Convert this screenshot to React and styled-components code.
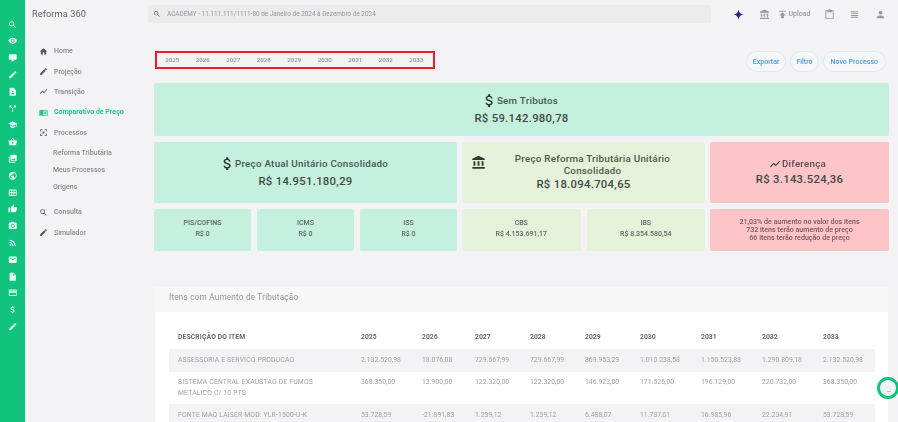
import React from "react";
import styled, { createGlobalStyle } from "styled-components";
import {
  MdSearch, MdVisibility, MdDesktopWindows, MdEdit, MdContactPage, MdCallSplit, MdSchool,
  MdShoppingBasket, MdPhotoLibrary, MdPublic, MdCalendarViewMonth, MdThumbUp, MdPhotoCamera,
  MdRssFeed, MdEmail, MdInsertDriveFile, MdCreditCard, MdAttachMoney, MdHome, MdShowChart,
  MdMenuBook, MdFilterCenterFocus, MdAccountBalance, MdPublish, MdContentPaste, MdViewHeadline, MdPerson,
} from "react-icons/md";

const Global = createGlobalStyle`
  html, body { margin: 0; padding: 0; background: #f3f3f5; overflow: hidden; }
  body { font-family: Roboto, "Liberation Sans", sans-serif; }
  * { box-sizing: border-box; }
`;

const Page = styled.div`
  display: flex;
  width: 898px;
  height: 422px;
  overflow: hidden;
  position: relative;
  filter: blur(0.6px);
`;

const Rail = styled.nav`
  flex: 0 0 25px;
  background: #10c47e;
  display: flex;
  flex-direction: column;
  align-items: center;
  padding-top: 16px;
  color: #eafff6;
`;
const RailItem = styled.span`
  flex: 0 0 16.8px;
  display: flex;
  align-items: center;
  justify-content: center;
  font-size: 9.5px;
`;

const Side = styled.aside`
  flex: 0 0 115px;
  padding: 7px 0 0 7px;
  color: #7b7b7f;
`;
const Brand = styled.div`
  height: 13px;
  line-height: 13px;
  font-size: 9.2px;
  color: #5f5f63;
  letter-spacing: 0.1px;
  margin-bottom: 21px;
`;
const MenuItem = styled.div`
  display: flex;
  align-items: center;
  gap: 6px;
  padding-left: 7px;
  height: 20.4px;
  font-size: 7px;
  font-weight: ${(p) => (p.$active ? 700 : 500)};
  color: ${(p) => (p.$active ? "#25c98c" : "#88888c")};
  svg { font-size: 9px; flex: none; color: ${(p) => (p.$active ? "#25c98c" : "#55555a")}; }
`;
const SubList = styled.div`
  padding-top: 2px;
  padding-bottom: 6px;
`;
const SubItem = styled.div`
  height: 17px;
  line-height: 17px;
  padding-left: 21px;
  font-size: 7px;
  font-weight: 500;
  color: #8a8a8e;
`;

const Main = styled.main`
  flex: 1;
  min-width: 0;
  display: flex;
  flex-direction: column;
  padding: 5px 9px 0 8px;
`;
const Top = styled.header`
  flex: none;
  display: flex;
  align-items: center;
  height: 18px;
  color: #808084;
`;
const Search = styled.div`
  flex: 0 0 563px;
  height: 18px;
  background: #ebebec;
  border-radius: 2px;
  display: flex;
  align-items: center;
  gap: 6px;
  padding-left: 5px;
  font-size: 6.4px;
  color: #97979b;
  white-space: nowrap;
  svg { font-size: 8px; color: #66666a; }
`;
const TopIcons = styled.div`
  flex: 1;
  display: flex;
  align-items: center;
  padding-left: 21px;
  svg { font-size: 11px; flex: none; }
`;
const TopSlot = styled.span`
  display: flex;
  align-items: center;
  justify-content: center;
  flex: 0 0 ${(p) => p.$w}px;
  gap: 1px;
  font-size: 7px;
  font-weight: 500;
  color: #98989c;
`;

const Tools = styled.div`
  flex: none;
  display: flex;
  justify-content: space-between;
  align-items: flex-start;
  margin-top: 28px;
  padding: 0 3px 0 7px;
  height: 32px;
`;
const Years = styled.div`
  width: 280px;
  height: 18px;
  border: 2px solid #ee1c2b;
  display: flex;
  align-items: center;
`;
const Year = styled.span`
  flex: 0 0 30.5px;
  text-align: center;
  font-size: 6.2px;
  font-weight: 500;
  color: #919195;
`;
const Actions = styled.div`
  display: flex;
  gap: 4px;
`;
const Action = styled.span`
  height: 21px;
  padding: 0 ${(p) => p.$pad}px;
  display: flex;
  align-items: center;
  border: 1px solid #d8e7f5;
  border-radius: 11px;
  background: #f5f6f8;
  color: #4d9be0;
  font-size: 7px;
  font-weight: 500;
`;

const Cards = styled.section`
  flex: none;
  display: grid;
  grid-template-columns: 1fr;
  gap: 6px;
  width: 735px;
  margin-left: 6px;
`;
const Tones = {
  green: { bg: "#c5f0de", fg: "#3e5a50" },
  lime: { bg: "#e5f2d9", fg: "#4a5a45" },
  red: { bg: "#fdc5c7", fg: "#5d4a4c" },
};
const Card = styled.div`
  background: ${(p) => Tones[p.$tone].bg};
  color: ${(p) => Tones[p.$tone].fg};
  border-radius: 2px;
  display: flex;
  flex-direction: column;
  align-items: center;
  justify-content: center;
  text-align: center;
  position: relative;
`;
const Hero = styled(Card)`
  height: 53px;
`;
const Row = styled.div`
  display: grid;
  grid-template-columns: 303px 243px 179px;
  gap: 5px;
`;
const Big = styled(Card)`
  height: 61px;
`;
const SmallRow = styled.div`
  display: flex;
  gap: 6px;
`;
const Small = styled(Card)`
  flex: 1;
  height: 42px;
  padding-bottom: 2px;
  font-size: 7px;
  font-weight: 500;
  line-height: 11px;
  color: #5a6863;
`;
const Note = styled(Card)`
  height: 42px;
  font-size: 7.1px;
  font-weight: 500;
  line-height: 8px;
  color: #80545a;
`;
const Title = styled.div`
  display: flex;
  align-items: center;
  justify-content: center;
  gap: 0;
  font-size: 9.8px;
  font-weight: 500;
  letter-spacing: 0.25px;
  line-height: 12px;
  transform: translateX(-2px);
  svg { font-size: ${(p) => p.$icon || 17}px; color: #2c3a35; margin-right: ${(p) => (p.$icon ? 1 : -1)}px; }
`;
const Amount = styled.div`
  font-size: 11.3px;
  font-weight: 500;
  letter-spacing: 0.3px;
  line-height: 16px;
  margin-top: 2px;
  color: #3d4a45;
`;
const Bank = styled.span`
  position: absolute;
  left: 9px;
  top: 13px;
  font-size: 15px;
  display: flex;
  color: #2c3a35;
`;
const WrapTitle = styled(Title)`
  width: 172px;
  margin-left: 18px;
  transform: none;
`;
const BankAmount = styled(Amount)`
  margin: 0;
`;

const Panel = styled.section`
  flex: none;
  width: 733px;
  height: 135px;
  margin: 36px 0 0 7px;
  background: #fff;
`;
const PanelHead = styled.div`
  height: 25px;
  background: #f7f7f8;
  padding: 0 0 5px 14px;
  display: flex;
  align-items: center;
  font-size: 8.2px;
  letter-spacing: 0.2px;
  color: #939397;
`;
const Table = styled.table`
  margin: 13px 0 0 14px;
  width: 706px;
  border-collapse: collapse;
  table-layout: fixed;
  font-size: 6.8px;
  color: #a0a0a4;
`;
const Th = styled.th`
  width: ${(p) => p.$w}px;
  padding: 0 0 0 ${(p) => (p.$first ? 9 : 0)}px;
  height: 24px;
  text-align: left;
  font-size: 6.8px;
  font-weight: 700;
  letter-spacing: ${(p) => (p.$first ? 0.12 : 0)}px;
  color: #6a6a6e;
`;
const Tr = styled.tr`
  background: ${(p) => (p.$alt ? "#f3f3f5" : "#fff")};
`;
const Td = styled.td`
  padding: ${(p) => (p.$top ? 5 : 0)}px 0 0 ${(p) => (p.$first ? 9 : 0)}px;
  height: ${(p) => p.$h}px;
  line-height: 11px;
  letter-spacing: ${(p) => (p.$first ? 0.17 : 0.05)}px;
  vertical-align: ${(p) => (p.$top ? "top" : "middle")};
  white-space: nowrap;
`;

const Chat = styled.div`
  position: absolute;
  left: 877px;
  top: 377px;
  width: 22px;
  height: 22px;
  border-radius: 50%;
  border: 3px solid #10c47e;
  background: #eef3f3;
  &::after {
    content: "";
    position: absolute;
    left: 7px;
    top: 11px;
    width: 4px;
    height: 1px;
    background: #a5cfc0;
  }
`;

const railIcons = [
  MdSearch, MdVisibility, MdDesktopWindows, MdEdit, MdContactPage, MdCallSplit, MdSchool, MdShoppingBasket,
  MdPhotoLibrary, MdPublic, MdCalendarViewMonth, MdThumbUp, MdPhotoCamera, MdRssFeed, MdEmail,
  MdInsertDriveFile, MdCreditCard, MdAttachMoney, MdEdit,
];
const years = ["2025", "2026", "2027", "2028", "2029", "2030", "2031", "2032", "2033"];
const widths = [192, 61, 53, 55, 55, 55, 61, 61, 61, 52];
const rows = [
  { name: "ASSESSORIA E SERVICO PRODUCAO", h: 23, alt: true, v: ["2.132.520,98", "18.076,08", "729.667,99", "729.667,99", "869.953,29", "1.010.238,58", "1.150.523,88", "1.290.809,18", "2.132.520,98"] },
  { name: ["SISTEMA CENTRAL EXAUSTAO DE FUMOS", "METALICO C/ 10 PTS"], h: 32, top: true, v: ["368.350,00", "13.900,00", "122.320,00", "122.320,00", "146.923,00", "171.526,00", "196.129,00", "220.732,00", "368.350,00"] },
  { name: "FONTE MAQ LAISER MOD: YLR-1500-U-K", h: 23, alt: true, v: ["53.728,59", "-21.891,83", "1.239,12", "1.239,12", "6.488,07", "11.737,01", "16.985,96", "22.234,91", "53.728,59"] },
];

const Spark = () => (
  <svg width="11" height="11" viewBox="0 0 24 24" fill="#3b1d8f" aria-hidden="true">
    <path d="M12 1c1 6 4 10 11 11-7 1-10 5-11 11-1-6-4-10-11-11 7-1 10-5 11-11z" />
  </svg>
);

export default function App() {
  return (
    <Page>
      <Global />
      <Rail>
        {railIcons.map((Icon, i) => (
          <RailItem key={i}><Icon /></RailItem>
        ))}
      </Rail>
      <Side>
        <Brand>Reforma 360</Brand>
        <MenuItem><MdHome />Home</MenuItem>
        <MenuItem><MdEdit />Projeção</MenuItem>
        <MenuItem><MdShowChart />Transição</MenuItem>
        <MenuItem $active><MdMenuBook />Comparativo de Preço</MenuItem>
        <MenuItem><MdFilterCenterFocus />Processos</MenuItem>
        <SubList>
          <SubItem>Reforma Tributária</SubItem>
          <SubItem>Meus Processos</SubItem>
          <SubItem>Origens</SubItem>
        </SubList>
        <MenuItem><MdSearch />Consulta</MenuItem>
        <MenuItem><MdEdit />Simulador</MenuItem>
      </Side>
      <Main>
        <Top>
          <Search><MdSearch />ACADEMY - 11.111.111/1111-80 de Janeiro de 2024 à Dezembro de 2024</Search>
          <TopIcons>
            <TopSlot $w={12}><Spark /></TopSlot>
            <TopSlot $w={8} />
            <TopSlot $w={24}><MdAccountBalance /></TopSlot>
            <TopSlot $w={35}><MdPublish />Upload</TopSlot>
            <TopSlot $w={8} />
            <TopSlot $w={20}><MdContentPaste /></TopSlot>
            <TopSlot $w={30}><MdViewHeadline /></TopSlot>
            <TopSlot $w={22}><MdPerson /></TopSlot>
          </TopIcons>
        </Top>
        <Tools>
          <Years>{years.map((y) => <Year key={y}>{y}</Year>)}</Years>
          <Actions>
            <Action $pad={6}>Exportar</Action>
            <Action $pad={5}>Filtro</Action>
            <Action $pad={7}>Novo Processo</Action>
          </Actions>
        </Tools>
        <Cards>
          <Hero $tone="green">
            <Title><MdAttachMoney />Sem Tributos</Title>
            <Amount>R$ 59.142.980,78</Amount>
          </Hero>
          <Row>
            <Big $tone="green">
              <Title><MdAttachMoney />Preço Atual Unitário Consolidado</Title>
              <Amount>R$ 14.951.180,29</Amount>
            </Big>
            <Big $tone="lime">
              <Bank><MdAccountBalance /></Bank>
              <WrapTitle>Preço Reforma Tributária Unitário Consolidado</WrapTitle>
              <BankAmount>R$ 18.094.704,65</BankAmount>
            </Big>
            <Big $tone="red">
              <Title $icon={12}><MdShowChart />Diferença</Title>
              <Amount>R$ 3.143.524,36</Amount>
            </Big>
          </Row>
          <Row>
            <SmallRow>
              <Small $tone="green"><span>PIS/COFINS</span><span>R$ 0</span></Small>
              <Small $tone="green"><span>ICMS</span><span>R$ 0</span></Small>
              <Small $tone="green"><span>ISS</span><span>R$ 0</span></Small>
            </SmallRow>
            <SmallRow>
              <Small $tone="lime"><span>CBS</span><span>R$ 4.153.691,17</span></Small>
              <Small $tone="lime"><span>IBS</span><span>R$ 8.354.580,54</span></Small>
            </SmallRow>
            <Note $tone="red">
              <span>21,03% de aumento no valor dos itens</span>
              <span>732 itens terão aumento de preço</span>
              <span>66 itens terão redução de preço</span>
            </Note>
          </Row>
        </Cards>
        <Panel>
          <PanelHead>Itens com Aumento de Tributação</PanelHead>
          <Table>
            <thead>
              <tr>
                <Th $first $w={widths[0]}>DESCRIÇÃO DO ITEM</Th>
                {years.map((y, i) => <Th key={y} $w={widths[i + 1]}>{y}</Th>)}
              </tr>
            </thead>
            <tbody>
              {rows.map((r, i) => (
                <Tr key={i} $alt={r.alt}>
                  <Td $first $h={r.h} $top={r.top}>
                    {Array.isArray(r.name) ? <>{r.name[0]}<br />{r.name[1]}</> : r.name}
                  </Td>
                  {r.v.map((v, j) => <Td key={j} $h={r.h} $top={r.top}>{v}</Td>)}
                </Tr>
              ))}
            </tbody>
          </Table>
        </Panel>
      </Main>
      <Chat />
    </Page>
  );
}
